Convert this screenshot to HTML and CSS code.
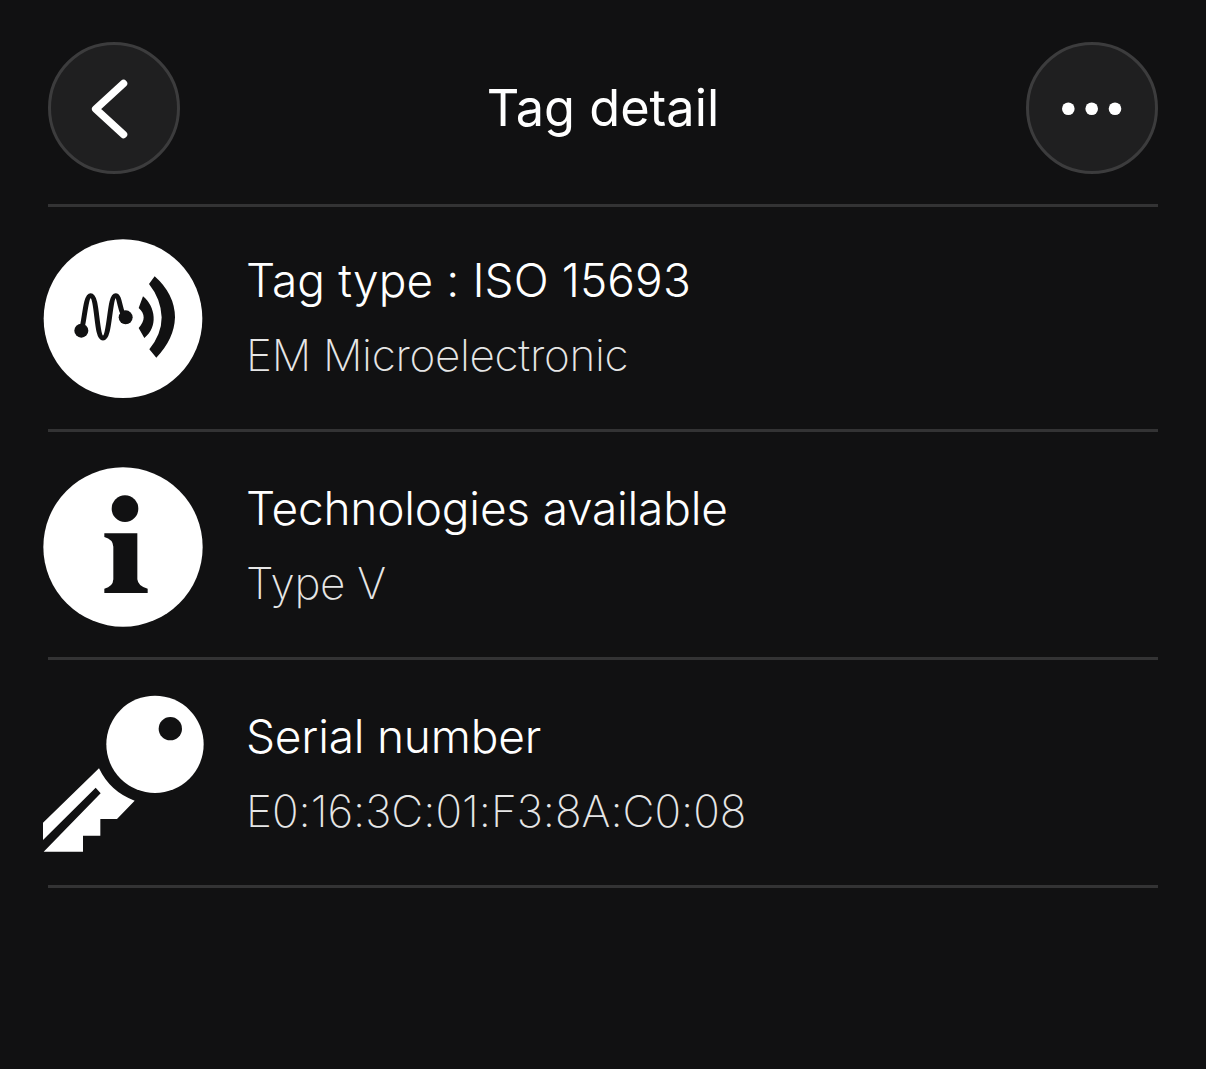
FILE: index.html
```html
<!DOCTYPE html>
<html lang="en">
<head>
    <meta charset="UTF-8">
    <meta name="viewport" content="width=device-width, initial-scale=1.0">
    <title>Tag detail</title>
    <link rel="stylesheet" href="styles.css">
</head>
<body>
    <header class="top-bar">
        <button class="round-btn" aria-label="Back">
            <svg class="btn-icon" viewBox="0 0 132 132">
                <path d="M75.500 41.500 L47.700 67 L75.500 92.500" fill="none" stroke="#fff" stroke-width="7.500" stroke-linecap="round" stroke-linejoin="round"/>
            </svg>
        </button>
        <h1 class="title">Tag detail</h1>
        <button class="round-btn" aria-label="More">
            <svg class="btn-icon" viewBox="0 0 132 132">
                <circle cx="42.300" cy="66.700" r="6.300" fill="#fff"/>
                <circle cx="65.700" cy="66.700" r="6.300" fill="#fff"/>
                <circle cx="89" cy="66.700" r="6.300" fill="#fff"/>
            </svg>
        </button>
    </header>

    <ul class="detail-list">
        <li class="row">
            <svg class="row-icon" viewBox="40 25 480 480">
                <circle cx="280" cy="264" r="238" fill="#fff"/>
                <path d="M155 300 C165 270 167 195 183 195 C205 195 198 322 220 322 C242 322 238 195 258 195 C272 195 270 250 288 260" fill="none" stroke="#111112" stroke-width="15"/>
                <circle cx="155" cy="300" r="21" fill="#111112"/>
                <circle cx="288" cy="260" r="21" fill="#111112"/>
                <path d="M340 197 C378 228 386 290 344 322 L327 292 C347 270 347 250 327 232 Z" fill="#111112"/>
                <path d="M375 137 Q435 190 436 260 Q434 325 380 381 L359 356 Q396 310 396 260 Q394 205 358 160 Z" fill="#111112"/>
            </svg>
            <div class="row-text">
                <p class="row-title numeric">Tag type : ISO 15693</p>
                <p class="row-sub">EM Microelectronic</p>
            </div>
        </li>
        <li class="row">
            <svg class="row-icon" viewBox="40 33 480 480">
                <circle cx="280" cy="273" r="239" fill="#fff"/>
                <circle cx="286" cy="158" r="40" fill="#111112"/>
                <path d="M224 232 H323 V370 Q325 391 354 398 V411 H224 V398 Q250 392 251 370 V272 Q250 250 224 243 Z" fill="#111112"/>
            </svg>
            <div class="row-text">
                <p class="row-title">Technologies available</p>
                <p class="row-sub">Type V</p>
            </div>
        </li>
        <li class="row">
            <svg class="row-icon" viewBox="40 30 480 480">
                <circle cx="376" cy="178" r="146" fill="#fff"/>
                <circle cx="422" cy="131" r="35" fill="#111112"/>
                <path d="M40 413 L208 250 Q242 321 315 347 L262 402 H212 V452 H160 V500 H42 L213 325 L198 308 L40 465 Z" fill="#fff"/>
            </svg>
            <div class="row-text">
                <p class="row-title">Serial number</p>
                <p class="row-sub numeric">E0:16:3C:01:F3:8A:C0:08</p>
            </div>
        </li>
    </ul>
</body>
</html>
```

FILE: styles.css
```css
html, body {
    height: 100%;
}
body {
    margin: 0;
    padding: 42px 48px 0;
    box-sizing: border-box;
    background-color: #111112;
    color: #fff;
    font-family: Inter, "Noto Sans", sans-serif;
    font-feature-settings: "calt" 0;
    overflow: hidden;
}
.top-bar {
    display: flex;
    justify-content: space-between;
    align-items: center;
    padding-bottom: 30px;
    border-bottom: 3px solid #333334;
}
.round-btn {
    width: 132px;
    height: 132px;
    padding: 0;
    background-color: #1f1f20;
    border: 3px solid #3c3c3d;
    border-radius: 50%;
}
.btn-icon {
    display: block;
    width: 132px;
    height: 132px;
    margin: -3px;
}
.title {
    margin: 0;
    font-size: 50.500px;
    font-weight: 400;
    line-height: 60px;
}
.detail-list {
    margin: 0;
    padding: 0;
    list-style: none;
}
.row {
    display: flex;
    align-items: center;
    gap: 43px;
    height: 228px;
    box-sizing: border-box;
    padding-top: 4px;
    border-bottom: 3px solid #333334;
}
.row:first-child {
    height: 225px;
    padding-top: 1px;
}
.row-icon {
    flex: none;
    width: 160px;
    height: 160px;
    margin-left: -5px;
    overflow: visible;
}
.row-text {
    display: flex;
    flex-direction: column;
    gap: 20px;
    margin-top: -3px;
}
.row-title {
    margin: 0;
    font-size: 46px;
    font-weight: 300;
    line-height: 56px;
    letter-spacing: -0.200px;
}
.row-sub {
    margin: 0;
    font-size: 44px;
    font-weight: 200;
    line-height: 54px;
    letter-spacing: -0.300px;
    color: #e6e6e6;
}
.row-title.numeric {
    letter-spacing: 0.100px;
}
.row-sub.numeric {
    letter-spacing: 0;
}
```
